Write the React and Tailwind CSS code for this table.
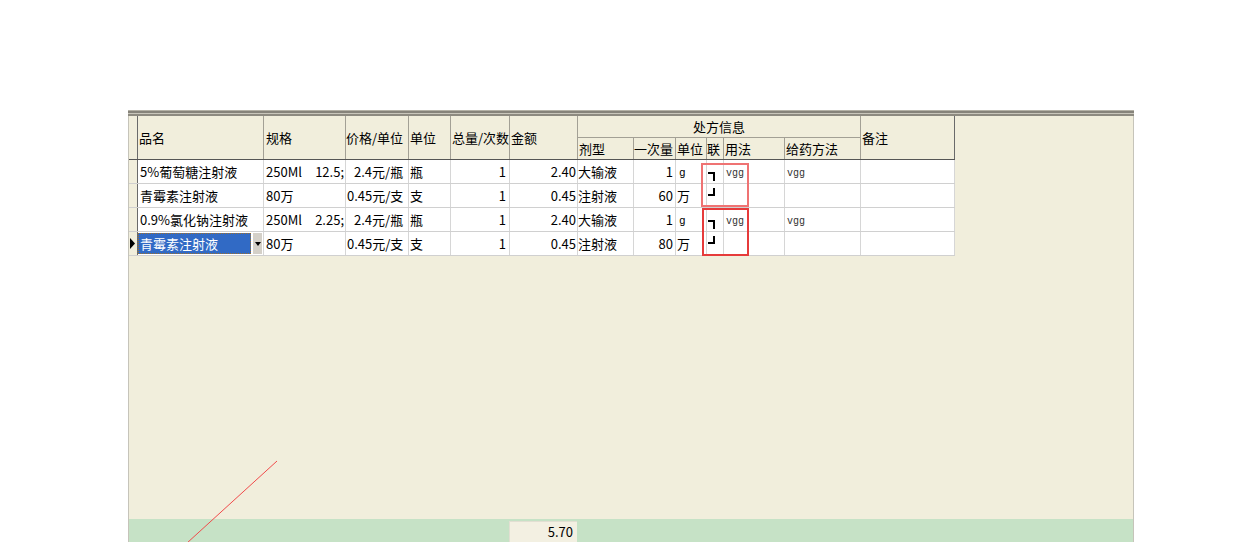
import React from "react";

const F = "font-['Noto_Sans_CJK_SC',sans-serif]";
const MONO = "font-['Liberation_Mono',monospace]";

const rows = [
  { name: "5%葡萄糖注射液", spec: "250Ml", spec2: "12.5;", price: "2.4元/瓶", pp: "pl-[8px]", unit: "瓶", total: "1", amount: "2.40", form: "大输液", dose: "1", du: "g", lian: "top", usage: "vgg", method: "vgg" },
  { name: "青霉素注射液", spec: "80万", spec2: "", price: "0.45元/支", pp: "pl-[1px]", unit: "支", total: "1", amount: "0.45", form: "注射液", dose: "60", du: "万", lian: "bottom", usage: "", method: "" },
  { name: "0.9%氯化钠注射液", spec: "250Ml", spec2: "2.25;", price: "2.4元/瓶", pp: "pl-[8px]", unit: "瓶", total: "1", amount: "2.40", form: "大输液", dose: "1", du: "g", lian: "top", usage: "vgg", method: "vgg" },
  { name: "青霉素注射液", selected: true, spec: "80万", spec2: "", price: "0.45元/支", pp: "pl-[1px]", unit: "支", total: "1", amount: "0.45", form: "注射液", dose: "80", du: "万", lian: "bottom", usage: "", method: "" },
];

const HB = "border-r border-[#a3a095]";

function HeaderCell({ w, children, dark }) {
  return (
    <div className={`${w} shrink-0 h-full flex items-center pl-[1px] ${dark ? "border-r border-[#6a6a6a]" : HB} text-[13px] leading-[14px] whitespace-nowrap overflow-hidden`}>
      {children}
    </div>
  );
}

function Lian({ kind }) {
  if (kind === "top") {
    return (
      <div className="h-full w-full flex flex-col pl-[1px] pt-[12px]">
        <div className="w-[7px] h-[9px] border-t-2 border-r-2 border-black" />
      </div>
    );
  }
  return (
    <div className="h-full w-full flex flex-col pl-[1px] pt-[4px]">
      <div className="w-[7px] h-[8px] border-b-2 border-r-2 border-black" />
    </div>
  );
}

const DC = "shrink-0 h-full border-r border-[#d6d6d6] flex items-center overflow-hidden whitespace-nowrap";

function DataRow({ r }) {
  return (
    <div className="flex h-[24px] w-[826px] border-b border-[#d0d0d0] bg-white text-[13px] leading-[14px]">
      <div className="w-[9px] shrink-0 h-full bg-[#f1eedc] border-r border-[#6a6a6a] flex items-center">
        {r.selected && (
          <svg width="6" height="11" viewBox="0 0 6 11" className="ml-[1px]">
            <path d="M0 0 L5 5.5 L0 11 Z" fill="#000" />
          </svg>
        )}
      </div>
      <div className={`w-[126px] ${DC}`}>
        {r.selected ? (
          <div className="flex items-stretch h-full w-full pt-[1px] pb-[1px]">
            <div className="w-[113px] h-full bg-[#316ac5] text-white border border-dotted border-[#a0702a] flex items-center pl-[1px]">
              {r.name}
            </div>
            <div className="ml-[1px] w-[10px] h-full bg-[#d4d0c8] border-l border-[#ffffff] flex items-center justify-center">
              <svg width="6" height="4" viewBox="0 0 6 4"><path d="M0 0 H6 L3 4 Z" fill="#000" /></svg>
            </div>
          </div>
        ) : (
          <span className="pl-[2px]">{r.name}</span>
        )}
      </div>
      <div className={`w-[82px] ${DC} justify-between`}>
        <span className="pl-[2px]">{r.spec}</span>
        {r.spec2 && <span className="pr-[1px]">{r.spec2}</span>}
      </div>
      <div className={`w-[63px] ${DC}`}>
        <span className={r.pp}>{r.price}</span>
      </div>
      <div className={`w-[42px] ${DC}`}>
        <span className="pl-[1px]">{r.unit}</span>
      </div>
      <div className={`w-[59px] ${DC} justify-end pr-[3px]`}>{r.total}</div>
      <div className={`w-[68px] ${DC} justify-end pr-[1px]`}>{r.amount}</div>
      <div className={`w-[56px] ${DC}`}>
        <span>{r.form}</span>
      </div>
      <div className={`w-[42px] ${DC} justify-end pr-[2px]`}>{r.dose}</div>
      <div className={`w-[31px] ${DC}`}>
        <span className={r.du === "g" ? `pl-[3px] pt-[3px] text-[11px] ${MONO}` : "pl-[1px]"}>{r.du}</span>
      </div>
      <div className={`w-[17px] ${DC} items-start`}>
        <Lian kind={r.lian} />
      </div>
      <div className={`w-[61px] ${DC}`}>
        <span className={`pl-[2px] pt-[4px] text-[10px] text-[#333] ${MONO}`}>{r.usage}</span>
      </div>
      <div className={`w-[76px] ${DC}`}>
        <span className={`pl-[2px] pt-[4px] text-[10px] text-[#333] ${MONO}`}>{r.method}</span>
      </div>
      <div className={`w-[94px] ${DC}`} />
    </div>
  );
}

export default function App() {
  return (
    <div className={`relative w-[1248px] h-[542px] overflow-hidden bg-white text-black ${F}`}>
      <div className="ml-[128px] mt-[110px] w-[1006px] h-[432px] flex flex-col">
        {/* top bands */}
        <div className="shrink-0 h-[1px] bg-[#b4b1a6]" />
        <div className="shrink-0 h-[2px] bg-[#86837a]" />
        <div className="shrink-0 h-[1px] bg-[#c9c6bb]" />
        <div className="shrink-0 h-[2px] bg-[#8d8a80]" />

        <div className="flex-1 flex flex-col bg-[#f1eedc] border-l border-r border-[#c6c4ba]">
          <div className="flex-1 flex flex-col">
            {/* header */}
            <div className="flex h-[44px] w-[826px] border-b border-[#555555]">
              <HeaderCell w="w-[9px]" dark />
              <HeaderCell w="w-[126px]">品名</HeaderCell>
              <HeaderCell w="w-[82px]"><span className="pl-[1px]">规格</span></HeaderCell>
              <HeaderCell w="w-[63px]"><span className="-ml-[1px]">价格/单位</span></HeaderCell>
              <HeaderCell w="w-[42px]">单位</HeaderCell>
              <HeaderCell w="w-[59px]">总量/次数</HeaderCell>
              <HeaderCell w="w-[68px]">金额</HeaderCell>
              <div className={`w-[283px] shrink-0 h-full flex flex-col ${HB}`}>
                <div className="h-[22px] shrink-0 border-b border-[#a3a095] flex items-center justify-center text-[13px] leading-[14px]">
                  处方信息
                </div>
                <div className="flex-1 flex">
                  <HeaderCell w="w-[56px]">剂型</HeaderCell>
                  <HeaderCell w="w-[42px]"><span className="-ml-[1px]">一次量</span></HeaderCell>
                  <HeaderCell w="w-[31px]">单位</HeaderCell>
                  <HeaderCell w="w-[17px]"><span className="-ml-[1px]">联</span></HeaderCell>
                  <HeaderCell w="w-[61px]">用法</HeaderCell>
                  <div className="w-[75px] shrink-0 h-full flex items-center pl-[1px] text-[13px] leading-[14px] whitespace-nowrap">给药方法</div>
                </div>
              </div>
              <HeaderCell w="w-[94px]" dark>备注</HeaderCell>
            </div>
            {/* rows */}
            {rows.map((r, i) => (
              <DataRow key={i} r={r} />
            ))}
          </div>

          {/* bottom summary bar */}
          <div className="shrink-0 h-[23px] bg-[#c6e2c6] flex items-end">
            <div className="ml-[380px] w-[68px] h-[21px] bg-[#f3f0e2] border-t border-l border-[#e2dfd2] flex items-center justify-end pr-[4px] text-[13px] leading-[14px]">
              5.70
            </div>
          </div>
        </div>
      </div>

      {/* red highlight boxes */}
      <div className="absolute left-[701px] top-[163px] w-[48px] h-[44px] border-2 border-[#ef7373] pointer-events-none" />
      <div className="absolute left-[702px] top-[208px] w-[47px] h-[48px] border-2 border-[#e63b3b] pointer-events-none" />

      {/* red stroke */}
      <svg className="absolute left-0 top-0 pointer-events-none" width="1248" height="542" viewBox="0 0 1248 542">
        <line x1="277" y1="461" x2="187" y2="543" stroke="#f04a4a" strokeWidth="1" />
      </svg>
    </div>
  );
}
